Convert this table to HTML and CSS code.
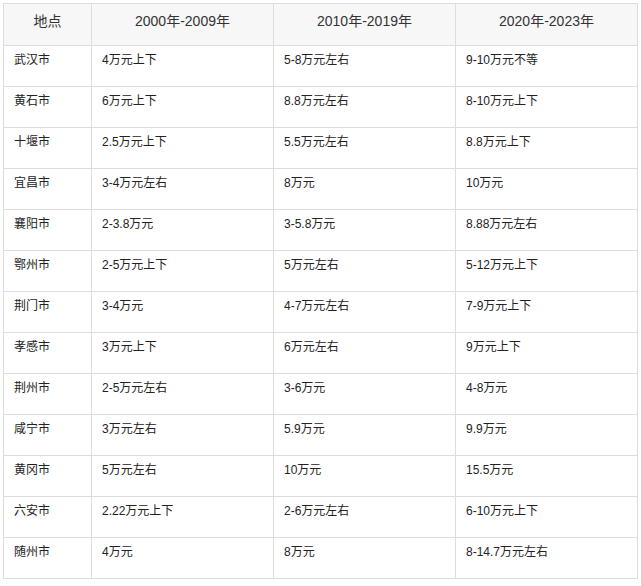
FILE: index.html
```html
<!DOCTYPE html>
<html lang="zh">
<head>
<meta charset="utf-8">
<title>湖北各市彩礼</title>
<link rel="stylesheet" href="styles.css">
</head>
<body>
<div class="wrap">
<table class="data">
<colgroup>
<col class="c1"><col class="c2"><col class="c3"><col class="c4">
</colgroup>
<thead>
<tr><th>地点</th><th>2000年-2009年</th><th>2010年-2019年</th><th>2020年-2023年</th></tr>
</thead>
<tbody>
<tr><td>武汉市</td><td>4万元上下</td><td>5-8万元左右</td><td>9-10万元不等</td></tr>
<tr><td>黄石市</td><td>6万元上下</td><td>8.8万元左右</td><td>8-10万元上下</td></tr>
<tr><td>十堰市</td><td>2.5万元上下</td><td>5.5万元左右</td><td>8.8万元上下</td></tr>
<tr><td>宜昌市</td><td>3-4万元左右</td><td>8万元</td><td>10万元</td></tr>
<tr><td>襄阳市</td><td>2-3.8万元</td><td>3-5.8万元</td><td>8.88万元左右</td></tr>
<tr><td>鄂州市</td><td>2-5万元上下</td><td>5万元左右</td><td>5-12万元上下</td></tr>
<tr><td>荆门市</td><td>3-4万元</td><td>4-7万元左右</td><td>7-9万元上下</td></tr>
<tr><td>孝感市</td><td>3万元上下</td><td>6万元左右</td><td>9万元上下</td></tr>
<tr><td>荆州市</td><td>2-5万元左右</td><td>3-6万元</td><td>4-8万元</td></tr>
<tr><td>咸宁市</td><td>3万元左右</td><td>5.9万元</td><td>9.9万元</td></tr>
<tr><td>黄冈市</td><td>5万元左右</td><td>10万元</td><td>15.5万元</td></tr>
<tr><td>六安市</td><td>2.22万元上下</td><td>2-6万元左右</td><td>6-10万元上下</td></tr>
<tr><td>随州市</td><td>4万元</td><td>8万元</td><td>8-14.7万元左右</td></tr>
</tbody>
</table>
</div>
</body>
</html>
```
FILE: styles.css
```css
html, body {
  margin: 0;
  padding: 0;
  background: #ffffff;
}
.wrap {
  padding: 3px 4px 0 3px;
}
.data {
  border-collapse: collapse;
  table-layout: fixed;
  width: 634px;
  font-family: "Liberation Sans", "Noto Sans CJK SC", sans-serif;
  color: #333333;
}
.c1 { width: 88px; }
.c2 { width: 182px; }
.c3 { width: 182px; }
.c4 { width: 182px; }
.data th,
.data td {
  border: 1px solid #dddddd;
  vertical-align: top;
  text-align: left;
}
.data th {
  background: #f7f7f7;
  font-weight: normal;
  font-size: 14px;
  line-height: 20px;
  height: 42px;
  padding: 7px 10px 0;
  box-sizing: border-box;
  text-align: center;
  color: #333333;
}
.data td {
  font-size: 12px;
  line-height: 18px;
  height: 41px;
  padding: 5px 10px 0;
  box-sizing: border-box;
  color: #222222;
}
```
